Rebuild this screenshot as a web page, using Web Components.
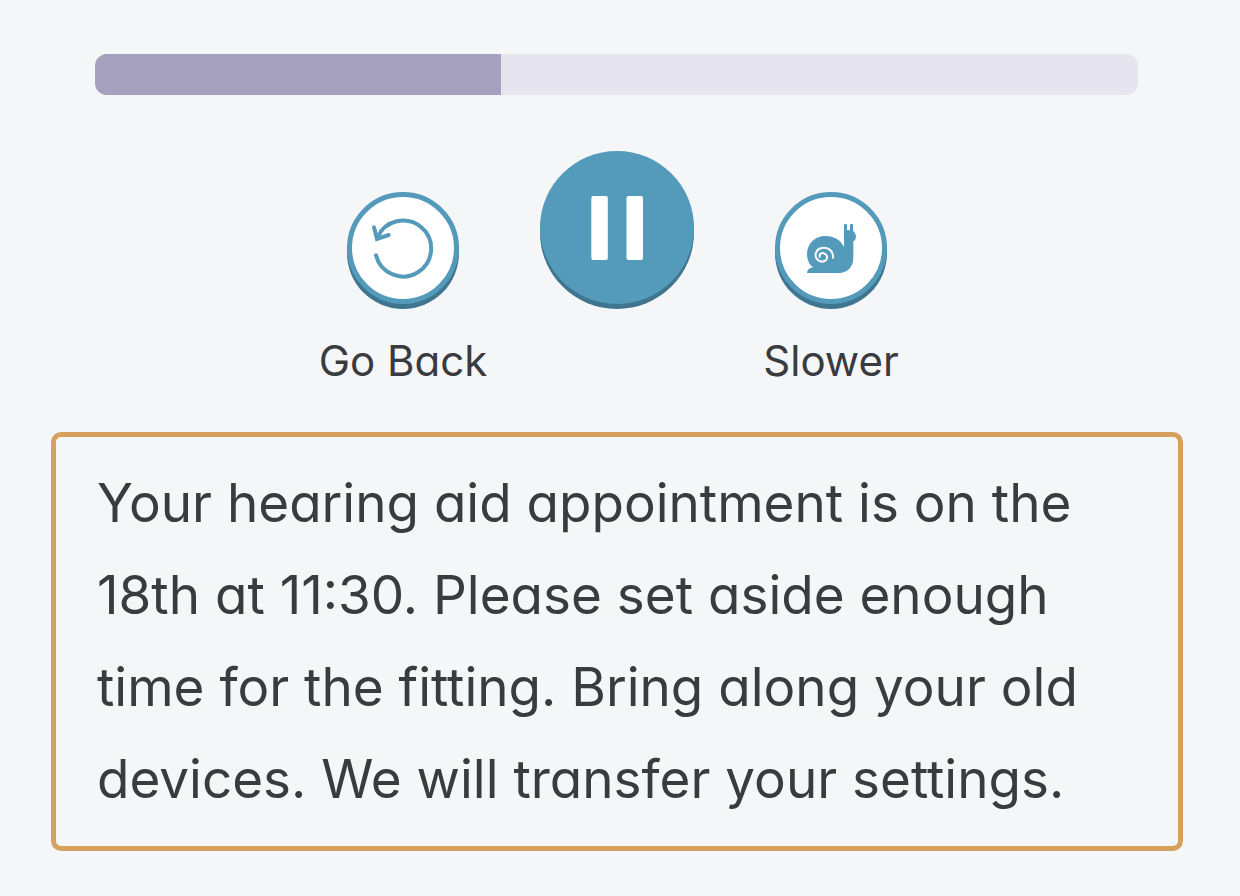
<!DOCTYPE html>
<html lang="en">
<head>
<meta charset="utf-8">
<meta name="viewport" content="width=device-width, initial-scale=1">
<title>Voice message</title>
<style>
  body {
    margin: 0; background: #f5f6f8; color: #393b3e;
    font-family: Inter, "Open Sans", sans-serif; font-feature-settings: "cv11";
  }
</style>
</head>
<body>
<message-player>
  <playback-progress value="38.9"></playback-progress>
  <player-controls>
    <round-button label="Go Back">
      <back-icon></back-icon>
    </round-button>
    <round-button name="Pause" primary>
      <pause-icon></pause-icon>
    </round-button>
    <round-button label="Slower">
      <snail-icon></snail-icon>
    </round-button>
  </player-controls>
  <message-transcript>Your hearing aid appointment is on the<br>18th at 11:30. Please set aside enough<br>time for the fitting. Bring along your old<br>devices. We will transfer your settings.</message-transcript>
</message-player>

<script>
const define = (name, html, setup) => customElements.define(name, class extends HTMLElement {
  constructor() {
    super();
    this.attachShadow({ mode: "open" }).innerHTML = html;
  }
  connectedCallback() {
    if (setup) setup(this, this.shadowRoot);
  }
});

define("message-player", `
  <style>
    :host { display: block; padding: 54px 57px 45px 51px; }
    main { display: flex; flex-direction: column; }
  </style>
  <main><slot></slot></main>`);

define("playback-progress", `
  <style>
    :host { display: block; margin: 0 45px 56px 44px; }
    progress {
      display: block; width: 100%; height: 41px; border: 0; border-radius: 12px;
      overflow: hidden; appearance: none; -webkit-appearance: none; background: #e6e4ef;
    }
    progress::-webkit-progress-bar { background: #e6e4ef; }
    progress::-webkit-progress-value { background: #a4a0bd; }
    progress::-moz-progress-bar { background: #a4a0bd; }
  </style>
  <progress max="100" aria-label="Playback position"></progress>`,
  (host, root) => { root.querySelector("progress").value = Number(host.getAttribute("value")); });

define("player-controls", `
  <style>
    :host {
      display: grid; grid-template-columns: repeat(3, 214px);
      justify-content: center; align-items: end; margin-bottom: 46px;
    }
  </style>
  <slot></slot>`);

define("round-button", `
  <style>
    :host { display: flex; flex-direction: column; align-items: center; gap: 32px; }
    button {
      display: flex; align-items: center; justify-content: center; box-sizing: border-box;
      width: 112px; height: 112px; padding: 0; border: 5px solid #549abb; border-radius: 50%;
      background: #fff; color: #549abb; box-shadow: 0 5px #3f758e; cursor: pointer;
    }
    :host([primary]) button { width: 154px; height: 153px; background: #549abb; color: #fff; }
    label { min-height: 50px; font-size: 42px; line-height: 50px; white-space: nowrap; }
  </style>
  <button type="button" id="control"><slot></slot></button>
  <label for="control"></label>`,
  (host, root) => {
    root.querySelector("label").textContent = host.getAttribute("label") || "";
    if (host.hasAttribute("name")) root.querySelector("button").setAttribute("aria-label", host.getAttribute("name"));
  });

const iconStyle = `<style>:host, svg { display: block; }</style>`;

define("back-icon", `${iconStyle}
  <svg width="66" height="66" viewBox="105 104 198 198" fill="none" stroke="currentColor" stroke-width="12" stroke-linecap="round" stroke-linejoin="round" aria-hidden="true">
    <path d="M123 225A84 84 0 1 0 127 172"/>
    <path d="M117 141L126 176L161 164" stroke-linejoin="miter"/>
  </svg>`);

define("pause-icon", `${iconStyle}
  <svg width="52" height="64" viewBox="0 0 52 64" fill="currentColor" aria-hidden="true">
    <rect x=".3" width="16.5" height="64" rx="2"/>
    <rect x="35.5" width="16.5" height="64" rx="2"/>
  </svg>`);

define("snail-icon", `${iconStyle}
  <svg width="52" height="52" viewBox="120 126 156 156" aria-hidden="true">
    <path fill="currentColor" d="M126 279Q126 266 144 262Q126 247 126 224C126 190 150 168 182 168C207 168 228 180 237 202V135Q237 132 240 132H243Q246 132 246 135V150Q251 152 255 150V135Q255 132 258 132H262Q264 132 264 135V152Q273 159 273 169Q273 180 265 184V234C265 260 248 279 222 279Z"/>
    <path fill="none" stroke="#fff" stroke-width="6" stroke-linecap="round" d="M164 231C162 222 170 217 177 220C187 224 189 235 182 241C174 248 160 245 154 235C147 221 156 206 171 204C191 200 206 215 204 233"/>
  </svg>`);

define("message-transcript", `
  <style>
    :host { display: block; padding: 20px 41px 21px; border: 5px solid #d6a05f; border-radius: 10px; }
    p { margin: 0; font-size: 53px; line-height: 92px; }
  </style>
  <p><slot></slot></p>`);
</script>
</body>
</html>
